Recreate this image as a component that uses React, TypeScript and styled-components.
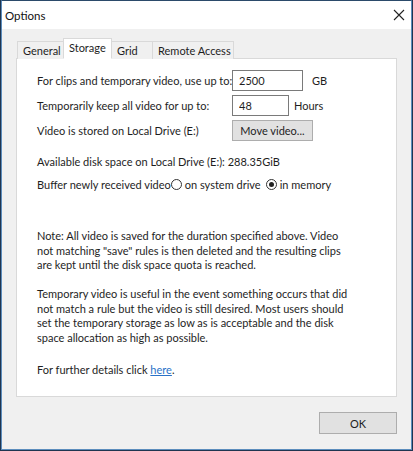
import React, { useState } from "react";
import styled, { createGlobalStyle } from "styled-components";

const tabs = [
  { name: "General", width: 47 },
  { name: "Storage", width: 49 },
  { name: "Grid", width: 42 },
  { name: "Remote Access", width: 82 },
];

const notes = [
  [
    "Note: All video is saved for the duration specified above. Video",
    'not matching "save" rules is then deleted and the resulting clips',
    "are kept until the disk space quota is reached.",
  ],
  [
    "Temporary video is useful in the event something occurs that did",
    "not match a rule but the video is still desired. Most users should",
    "set the temporary storage as low as is acceptable and the disk",
    "space allocation as high as possible.",
  ],
];

const App = () => {
  const [active, setActive] = useState("Storage");
  const [buffer, setBuffer] = useState("memory");

  return (
    <>
      <GlobalStyle />
      <Window>
        <TitleBar>
          <Title>Options</Title>
          <CloseButton aria-label="Close">
            <svg width="12" height="12" viewBox="0 0 12 12">
              <path d="M1 1L11 11M11 1L1 11" stroke="#222" strokeWidth="1.1" />
            </svg>
          </CloseButton>
        </TitleBar>
        <Body>
          <TabStrip>
            {tabs.map((t) => (
              <Tab
                key={t.name}
                $active={t.name === active}
                $width={t.width}
                onClick={() => setActive(t.name)}
              >
                {t.name}
              </Tab>
            ))}
          </TabStrip>
          <Panel>
            <FormGrid>
              <Label>For clips and temporary video, use up to:</Label>
              <Field>
                <TextInput $width={71} defaultValue="2500" />
                <Unit>GB</Unit>
              </Field>
              <Label>Temporarily keep all video for up to:</Label>
              <Field>
                <TextInput $width={57} defaultValue="48" />
                <Unit $gap={5}>Hours</Unit>
              </Field>
              <Label>Video is stored on Local Drive (E:)</Label>
              <Field>
                <PushButton $width={81}>Move video...</PushButton>
              </Field>
            </FormGrid>
            <Line $top={13}>Available disk space on Local Drive (E:): 288.35GiB</Line>
            <RadioRow>
              <span>Buffer newly received video</span>
              <RadioLabel onClick={() => setBuffer("system")}>
                <Radio $checked={buffer === "system"} />
                on system drive
              </RadioLabel>
              <RadioLabel $gap={5} onClick={() => setBuffer("memory")}>
                <Radio $checked={buffer === "memory"} />
                in memory
              </RadioLabel>
            </RadioRow>
            {notes.map((lines, i) => (
              <Note key={i}>
                {lines.map((l) => (
                  <NoteLine key={l}>{l}</NoteLine>
                ))}
              </Note>
            ))}
            <Line $top={17}>
              For further details click <Link href="#">here</Link>.
            </Line>
          </Panel>
          <Footer>
            <PushButton $width={78} $height={22}>OK</PushButton>
          </Footer>
        </Body>
      </Window>
    </>
  );
};

const uiFont = `Lato, "Noto Sans", Arial, sans-serif`;
const textColor = "#1e1e1e";
const faceGray = "#f0f0f0";
const buttonFace = "#e1e1e1";
const buttonBorder = "#adadad";
const tabBorder = "#d9d9d9";

const GlobalStyle = createGlobalStyle`
  html, body {
    margin: 0;
    background: #1f3550;
  }
  body {
    font-family: ${uiFont};
    font-size: 11px;
    color: ${textColor};
  }
`;

const Window = styled.div`
  width: 409px;
  height: 448px;
  margin-left: 1px;
  border: 1px solid #5c8dbd;
  border-top-color: #2b4a6a;
  display: flex;
  flex-direction: column;
  background: ${faceGray};
`;

const TitleBar = styled.div`
  height: 28px;
  background: #ffffff;
  display: flex;
  align-items: center;
  justify-content: space-between;
  padding: 0 6px 0 3px;
`;

const Title = styled.span`
  font-size: 11.5px;
  color: #111;
`;

const CloseButton = styled.span`
  display: flex;
  align-items: center;
`;

const Body = styled.div`
  flex: 1;
  display: flex;
  flex-direction: column;
  padding: 9px 14px 0 14px;
`;

const TabStrip = styled.div`
  display: flex;
  align-items: flex-end;
  height: 21px;
  padding-left: 1px;
  position: relative;
  z-index: 1;
`;

const Tab = styled.div<{ $active: boolean; $width: number }>`
  width: ${(p) => p.$width}px;
  height: ${(p) => (p.$active ? "21px" : "18px")};
  box-sizing: border-box;
  padding: ${(p) => (p.$active ? "0 0 2px 5px" : "0 0 0 5px")};
  display: flex;
  align-items: center;
  background: ${(p) => (p.$active ? "#ffffff" : faceGray)};
  border: 1px solid ${tabBorder};
  border-bottom: ${(p) => (p.$active ? "1px solid #ffffff" : "none")};
  position: relative;
  z-index: ${(p) => (p.$active ? 1 : 0)};
  cursor: default;
  & + & {
    margin-left: -1px;
  }
`;

const Panel = styled.div`
  height: 339px;
  box-sizing: border-box;
  background: #ffffff;
  border: 1px solid ${tabBorder};
  margin-top: -1px;
  padding: 11px 20px 0 20px;
`;

const FormGrid = styled.div`
  display: grid;
  grid-template-columns: 195px 1fr;
  grid-auto-rows: 21px;
  row-gap: 4px;
  align-items: center;
`;

const Label = styled.span`
  white-space: nowrap;
`;

const Field = styled.div`
  display: flex;
  align-items: center;
  height: 100%;
`;

const TextInput = styled.input<{ $width: number }>`
  width: ${(p) => p.$width}px;
  height: 21px;
  box-sizing: border-box;
  border: 1px solid #7a7a7a;
  padding: 0 6px;
  font-family: ${uiFont};
  font-size: 11px;
  color: ${textColor};
  background: #fff;
  outline: none;
`;

const Unit = styled.span<{ $gap?: number }>`
  margin-left: ${(p) => p.$gap ?? 9}px;
`;

const PushButton = styled.button<{ $width: number; $height?: number }>`
  width: ${(p) => p.$width}px;
  height: ${(p) => p.$height ?? 21}px;
  box-sizing: border-box;
  background: ${buttonFace};
  border: 1px solid ${buttonBorder};
  font-family: ${uiFont};
  font-size: 11px;
  color: ${textColor};
  padding: 0;
`;

const Line = styled.div<{ $top: number }>`
  margin-top: ${(p) => p.$top}px;
  line-height: 16px;
  white-space: nowrap;
`;

const RadioRow = styled.div`
  display: flex;
  align-items: center;
  margin-top: 6px;
  height: 16px;
  white-space: nowrap;
`;

const RadioLabel = styled.span<{ $gap?: number }>`
  display: flex;
  align-items: center;
  gap: 3px;
  margin-left: ${(p) => p.$gap ?? 0}px;
  cursor: default;
`;

const Radio = styled.span<{ $checked: boolean }>`
  width: 11px;
  height: 11px;
  box-sizing: border-box;
  border-radius: 50%;
  border: 1px solid #333;
  background: #fff;
  display: flex;
  align-items: center;
  justify-content: center;
  &::after {
    content: "";
    width: 5px;
    height: 5px;
    border-radius: 50%;
    background: ${(p) => (p.$checked ? "#222" : "transparent")};
  }
`;

const Note = styled.div`
  margin-top: 37px;
  line-height: 14.5px;
  & + & {
    margin-top: 14.5px;
  }
`;

const NoteLine = styled.div`
  white-space: nowrap;
`;

const Link = styled.a`
  color: #2a72c8;
  text-decoration: underline;
`;

const Footer = styled.div`
  display: flex;
  justify-content: flex-end;
  padding: 15px 0 0 0;
`;

export default App;
